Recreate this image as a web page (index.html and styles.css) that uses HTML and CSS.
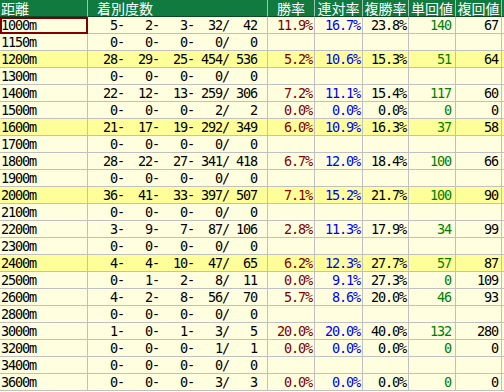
FILE: index.html
```html
<!DOCTYPE html>
<html lang="ja">
<head>
<meta charset="utf-8">
<title>距離別成績</title>
<link rel="stylesheet" href="styles.css">
</head>
<body>
<table class="stats">
<colgroup>
<col class="c-dist"><col class="c-count"><col class="c-rate"><col class="c-rate2"><col class="c-rate3"><col class="c-val"><col class="c-val2"><col class="c-extra">
</colgroup>
<thead>
<tr><th class="h-left">距離</th><th class="h-count">着別度数</th><th>勝率</th><th>連対率</th><th>複勝率</th><th>単回値</th><th>複回値</th><th></th></tr>
</thead>
<tbody>
<tr><td class="dist sel">1000m</td><td class="cnt">   5-   2-   3-  32/  42</td><td class="win">11.9%</td><td class="ren">16.7%</td><td class="fuku">23.8%</td><td class="tan">140</td><td class="fk">67</td><td></td></tr>
<tr><td class="dist">1150m</td><td class="cnt">   0-   0-   0-   0/   0</td><td></td><td></td><td></td><td></td><td></td><td></td></tr>
<tr class="hl"><td class="dist">1200m</td><td class="cnt">  28-  29-  25- 454/ 536</td><td class="win">5.2%</td><td class="ren">10.6%</td><td class="fuku">15.3%</td><td class="tan">51</td><td class="fk">64</td><td></td></tr>
<tr><td class="dist">1300m</td><td class="cnt">   0-   0-   0-   0/   0</td><td></td><td></td><td></td><td></td><td></td><td></td></tr>
<tr><td class="dist">1400m</td><td class="cnt">  22-  12-  13- 259/ 306</td><td class="win">7.2%</td><td class="ren">11.1%</td><td class="fuku">15.4%</td><td class="tan">117</td><td class="fk">60</td><td></td></tr>
<tr><td class="dist">1500m</td><td class="cnt">   0-   0-   0-   2/   2</td><td class="win">0.0%</td><td class="ren">0.0%</td><td class="fuku">0.0%</td><td class="tan">0</td><td class="fk">0</td><td></td></tr>
<tr class="hl"><td class="dist">1600m</td><td class="cnt">  21-  17-  19- 292/ 349</td><td class="win">6.0%</td><td class="ren">10.9%</td><td class="fuku">16.3%</td><td class="tan">37</td><td class="fk">58</td><td></td></tr>
<tr><td class="dist">1700m</td><td class="cnt">   0-   0-   0-   0/   0</td><td></td><td></td><td></td><td></td><td></td><td></td></tr>
<tr><td class="dist">1800m</td><td class="cnt">  28-  22-  27- 341/ 418</td><td class="win">6.7%</td><td class="ren">12.0%</td><td class="fuku">18.4%</td><td class="tan">100</td><td class="fk">66</td><td></td></tr>
<tr><td class="dist">1900m</td><td class="cnt">   0-   0-   0-   0/   0</td><td></td><td></td><td></td><td></td><td></td><td></td></tr>
<tr class="hl"><td class="dist">2000m</td><td class="cnt">  36-  41-  33- 397/ 507</td><td class="win">7.1%</td><td class="ren">15.2%</td><td class="fuku">21.7%</td><td class="tan">100</td><td class="fk">90</td><td></td></tr>
<tr><td class="dist">2100m</td><td class="cnt">   0-   0-   0-   0/   0</td><td></td><td></td><td></td><td></td><td></td><td></td></tr>
<tr><td class="dist">2200m</td><td class="cnt">   3-   9-   7-  87/ 106</td><td class="win">2.8%</td><td class="ren">11.3%</td><td class="fuku">17.9%</td><td class="tan">34</td><td class="fk">99</td><td></td></tr>
<tr><td class="dist">2300m</td><td class="cnt">   0-   0-   0-   0/   0</td><td></td><td></td><td></td><td></td><td></td><td></td></tr>
<tr class="hl"><td class="dist">2400m</td><td class="cnt">   4-   4-  10-  47/  65</td><td class="win">6.2%</td><td class="ren">12.3%</td><td class="fuku">27.7%</td><td class="tan">57</td><td class="fk">87</td><td></td></tr>
<tr><td class="dist">2500m</td><td class="cnt">   0-   1-   2-   8/  11</td><td class="win">0.0%</td><td class="ren">9.1%</td><td class="fuku">27.3%</td><td class="tan">0</td><td class="fk">109</td><td></td></tr>
<tr><td class="dist">2600m</td><td class="cnt">   4-   2-   8-  56/  70</td><td class="win">5.7%</td><td class="ren">8.6%</td><td class="fuku">20.0%</td><td class="tan">46</td><td class="fk">93</td><td></td></tr>
<tr><td class="dist">2800m</td><td class="cnt">   0-   0-   0-   0/   0</td><td></td><td></td><td></td><td></td><td></td><td></td></tr>
<tr><td class="dist">3000m</td><td class="cnt">   1-   0-   1-   3/   5</td><td class="win">20.0%</td><td class="ren">20.0%</td><td class="fuku">40.0%</td><td class="tan">132</td><td class="fk">280</td><td></td></tr>
<tr><td class="dist">3200m</td><td class="cnt">   0-   0-   0-   1/   1</td><td class="win">0.0%</td><td class="ren">0.0%</td><td class="fuku">0.0%</td><td class="tan">0</td><td class="fk">0</td><td></td></tr>
<tr><td class="dist">3400m</td><td class="cnt">   0-   0-   0-   0/   0</td><td></td><td></td><td></td><td></td><td></td><td></td></tr>
<tr><td class="dist">3600m</td><td class="cnt">   0-   0-   0-   3/   3</td><td class="win">0.0%</td><td class="ren">0.0%</td><td class="fuku">0.0%</td><td class="tan">0</td><td class="fk">0</td><td></td></tr>
</tbody>
</table>
</body>
</html>
```
FILE: styles.css
```css
html, body {
  margin: 0;
  padding: 0;
  background: #ffffe0;
  overflow: hidden;
}

.stats {
  border-collapse: separate;
  border-spacing: 0;
  table-layout: fixed;
  width: 522px;
  font-family: "DejaVu Sans Mono", monospace;
  font-size: 13.5px;
  letter-spacing: -1.13px;
  color: #000;
}

.c-dist { width: 88px; }
.c-count { width: 180px; }
.c-rate { width: 47px; }
.c-rate2 { width: 48px; }
.c-rate3 { width: 46px; }
.c-val { width: 47px; }
.c-val2 { width: 46px; }
.c-extra { width: 20px; }

.stats th,
.stats td {
  box-sizing: border-box;
  padding: 0;
  white-space: nowrap;
}

.stats th {
  height: 17px;
  line-height: 16px;
  background: #107a3f;
  color: #fff;
  font-family: "Noto Sans CJK JP", sans-serif;
  font-weight: normal;
  font-size: 14px;
  letter-spacing: 0;
  text-align: center;
  vertical-align: middle;
  border-right: 1px solid #9fc4ab;
  border-bottom: 1px solid #0b4a26;
}

.stats th.h-left {
  text-align: left;
  padding-left: 1px;
}

.stats th.h-count {
  text-align: left;
  padding-left: 9px;
}

.stats td {
  height: 17px;
  line-height: 16px;
  background: #ffffe0;
  border-right: 1px solid #c0c0c0;
  border-bottom: 1px solid #c0c0c0;
  text-align: right;
  padding-right: 2px;
}

.stats tr.hl td {
  background: #ffff99;
}

.stats td.dist {
  text-align: left;
  padding-left: 1px;
  padding-right: 0;
}

.stats td.sel {
  outline: 2px solid #7f0000;
  outline-offset: -2px;
}

.stats td.cnt {
  text-align: left;
  white-space: pre;
  padding-left: 1px;
  padding-right: 0;
}

.stats td.win { color: #800000; }
.stats td.ren { color: #0000ff; }
.stats td.fuku { color: #000; }
.stats td.tan { color: #008000; padding-right: 4px; }
.stats td.fk { color: #000; padding-right: 3px; }
```
